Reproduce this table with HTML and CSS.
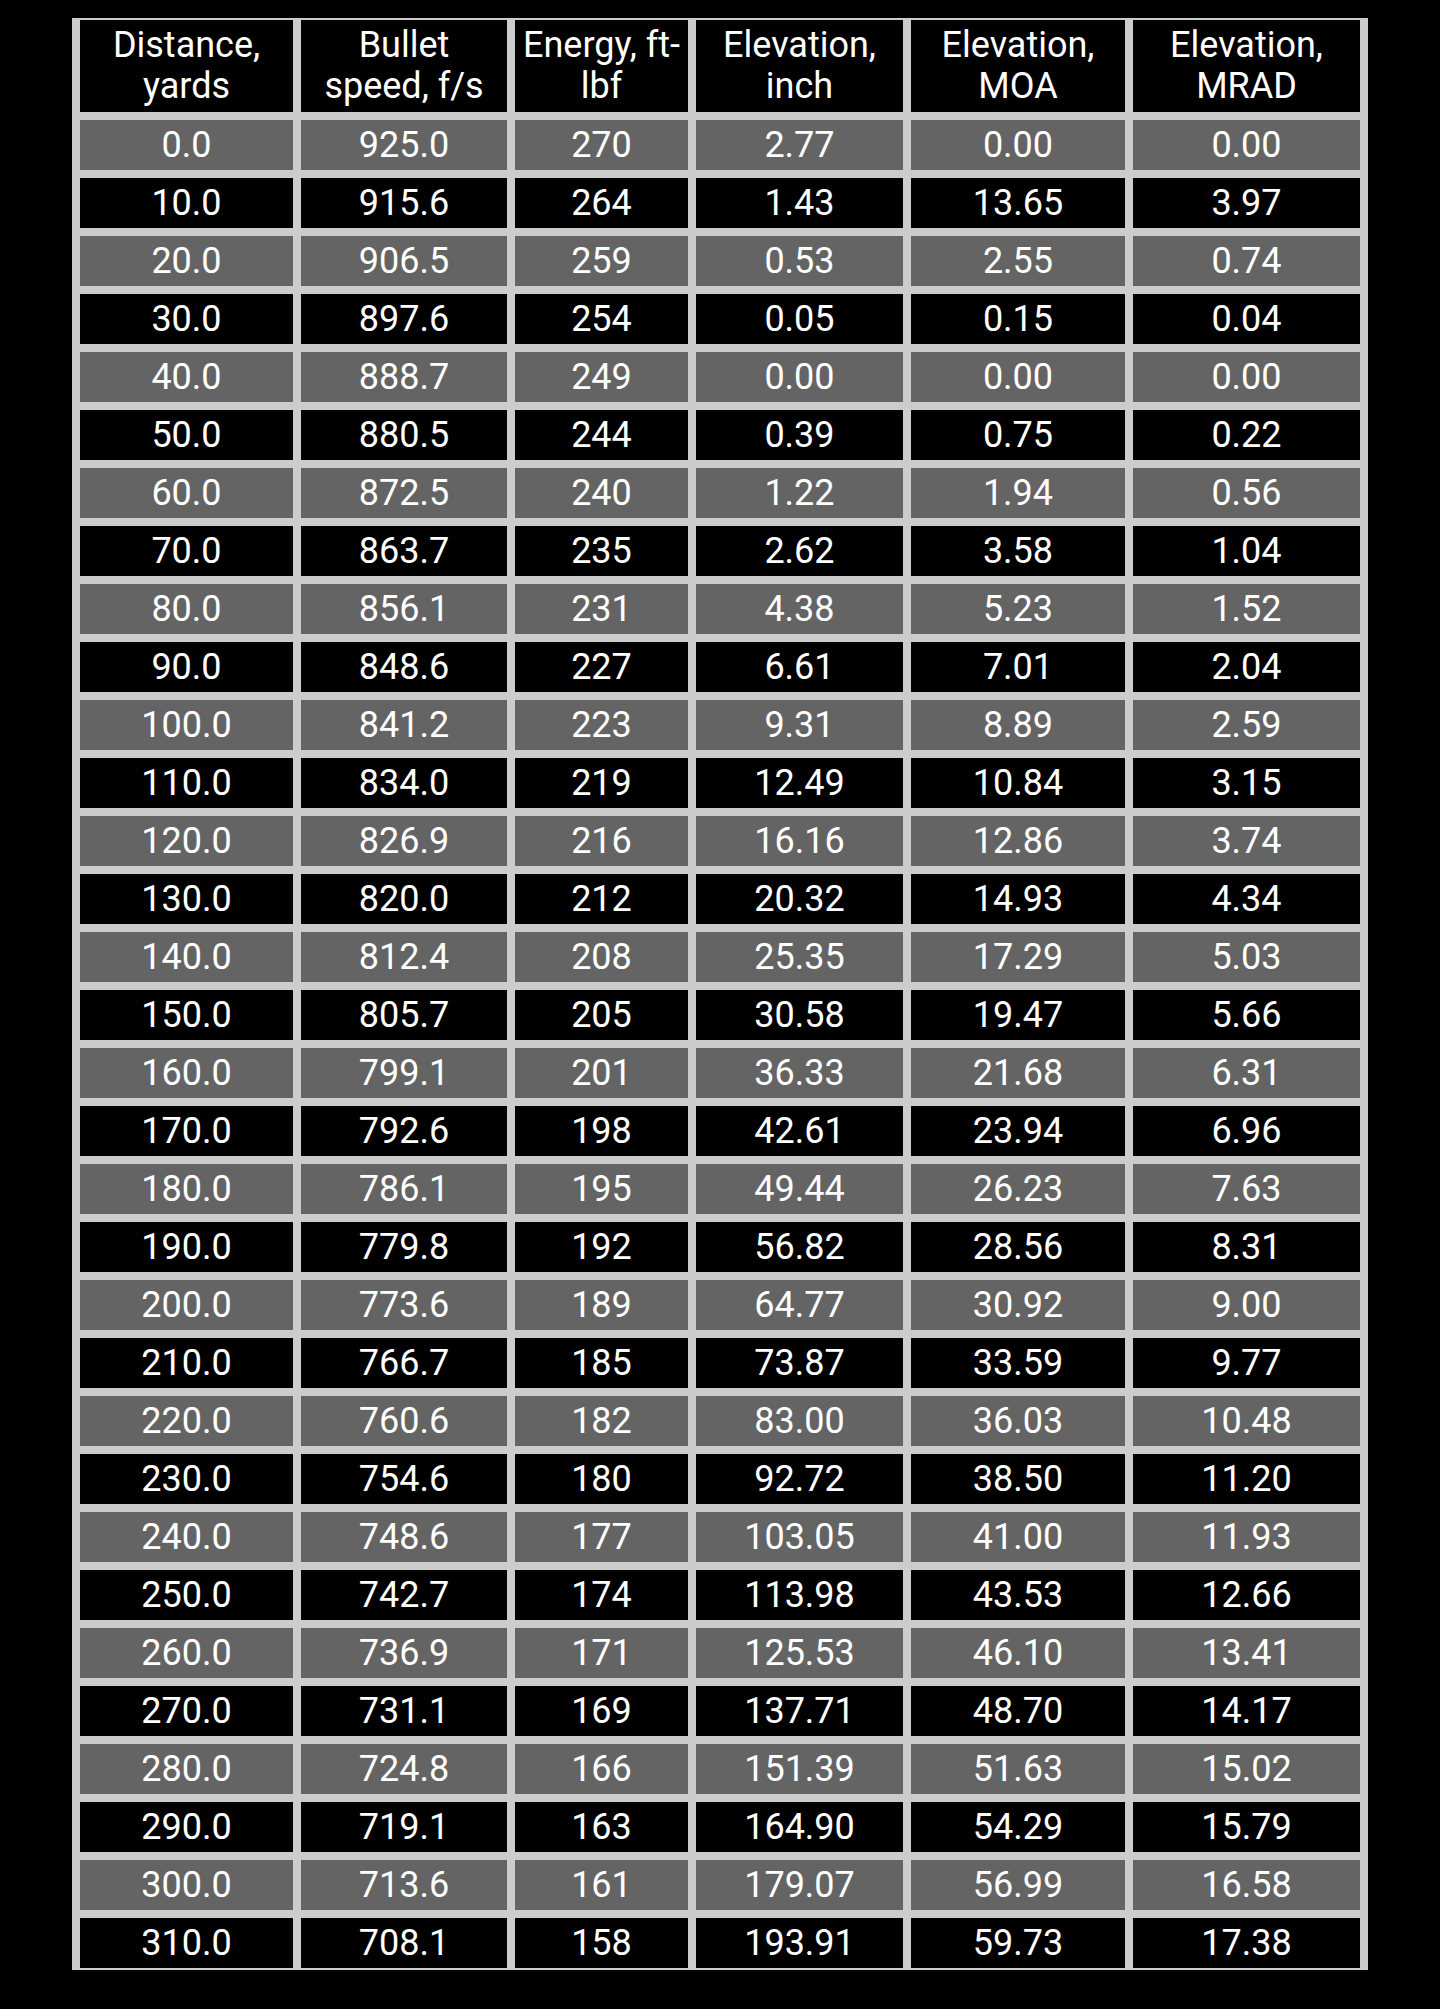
FILE: index.html
```html
<!DOCTYPE html>
<html lang="en">
<head>
<meta charset="utf-8">
<title>Ballistic table</title>
<link rel="stylesheet" href="styles.css">
</head>
<body>
<div class="page">
  <div class="table">
    <div class="row head">
      <div class="c">Distance,<br>yards</div>
      <div class="c">Bullet<br>speed, f/s</div>
      <div class="c">Energy, ft-<br>lbf</div>
      <div class="c">Elevation,<br>inch</div>
      <div class="c">Elevation,<br>MOA</div>
      <div class="c">Elevation,<br>MRAD</div>
    </div>
    <div class="row gray"><div class="c">0.0</div><div class="c">925.0</div><div class="c">270</div><div class="c">2.77</div><div class="c">0.00</div><div class="c">0.00</div></div>
    <div class="row dark"><div class="c">10.0</div><div class="c">915.6</div><div class="c">264</div><div class="c">1.43</div><div class="c">13.65</div><div class="c">3.97</div></div>
    <div class="row gray"><div class="c">20.0</div><div class="c">906.5</div><div class="c">259</div><div class="c">0.53</div><div class="c">2.55</div><div class="c">0.74</div></div>
    <div class="row dark"><div class="c">30.0</div><div class="c">897.6</div><div class="c">254</div><div class="c">0.05</div><div class="c">0.15</div><div class="c">0.04</div></div>
    <div class="row gray"><div class="c">40.0</div><div class="c">888.7</div><div class="c">249</div><div class="c">0.00</div><div class="c">0.00</div><div class="c">0.00</div></div>
    <div class="row dark"><div class="c">50.0</div><div class="c">880.5</div><div class="c">244</div><div class="c">0.39</div><div class="c">0.75</div><div class="c">0.22</div></div>
    <div class="row gray"><div class="c">60.0</div><div class="c">872.5</div><div class="c">240</div><div class="c">1.22</div><div class="c">1.94</div><div class="c">0.56</div></div>
    <div class="row dark"><div class="c">70.0</div><div class="c">863.7</div><div class="c">235</div><div class="c">2.62</div><div class="c">3.58</div><div class="c">1.04</div></div>
    <div class="row gray"><div class="c">80.0</div><div class="c">856.1</div><div class="c">231</div><div class="c">4.38</div><div class="c">5.23</div><div class="c">1.52</div></div>
    <div class="row dark"><div class="c">90.0</div><div class="c">848.6</div><div class="c">227</div><div class="c">6.61</div><div class="c">7.01</div><div class="c">2.04</div></div>
    <div class="row gray"><div class="c">100.0</div><div class="c">841.2</div><div class="c">223</div><div class="c">9.31</div><div class="c">8.89</div><div class="c">2.59</div></div>
    <div class="row dark"><div class="c">110.0</div><div class="c">834.0</div><div class="c">219</div><div class="c">12.49</div><div class="c">10.84</div><div class="c">3.15</div></div>
    <div class="row gray"><div class="c">120.0</div><div class="c">826.9</div><div class="c">216</div><div class="c">16.16</div><div class="c">12.86</div><div class="c">3.74</div></div>
    <div class="row dark"><div class="c">130.0</div><div class="c">820.0</div><div class="c">212</div><div class="c">20.32</div><div class="c">14.93</div><div class="c">4.34</div></div>
    <div class="row gray"><div class="c">140.0</div><div class="c">812.4</div><div class="c">208</div><div class="c">25.35</div><div class="c">17.29</div><div class="c">5.03</div></div>
    <div class="row dark"><div class="c">150.0</div><div class="c">805.7</div><div class="c">205</div><div class="c">30.58</div><div class="c">19.47</div><div class="c">5.66</div></div>
    <div class="row gray"><div class="c">160.0</div><div class="c">799.1</div><div class="c">201</div><div class="c">36.33</div><div class="c">21.68</div><div class="c">6.31</div></div>
    <div class="row dark"><div class="c">170.0</div><div class="c">792.6</div><div class="c">198</div><div class="c">42.61</div><div class="c">23.94</div><div class="c">6.96</div></div>
    <div class="row gray"><div class="c">180.0</div><div class="c">786.1</div><div class="c">195</div><div class="c">49.44</div><div class="c">26.23</div><div class="c">7.63</div></div>
    <div class="row dark"><div class="c">190.0</div><div class="c">779.8</div><div class="c">192</div><div class="c">56.82</div><div class="c">28.56</div><div class="c">8.31</div></div>
    <div class="row gray"><div class="c">200.0</div><div class="c">773.6</div><div class="c">189</div><div class="c">64.77</div><div class="c">30.92</div><div class="c">9.00</div></div>
    <div class="row dark"><div class="c">210.0</div><div class="c">766.7</div><div class="c">185</div><div class="c">73.87</div><div class="c">33.59</div><div class="c">9.77</div></div>
    <div class="row gray"><div class="c">220.0</div><div class="c">760.6</div><div class="c">182</div><div class="c">83.00</div><div class="c">36.03</div><div class="c">10.48</div></div>
    <div class="row dark"><div class="c">230.0</div><div class="c">754.6</div><div class="c">180</div><div class="c">92.72</div><div class="c">38.50</div><div class="c">11.20</div></div>
    <div class="row gray"><div class="c">240.0</div><div class="c">748.6</div><div class="c">177</div><div class="c">103.05</div><div class="c">41.00</div><div class="c">11.93</div></div>
    <div class="row dark"><div class="c">250.0</div><div class="c">742.7</div><div class="c">174</div><div class="c">113.98</div><div class="c">43.53</div><div class="c">12.66</div></div>
    <div class="row gray"><div class="c">260.0</div><div class="c">736.9</div><div class="c">171</div><div class="c">125.53</div><div class="c">46.10</div><div class="c">13.41</div></div>
    <div class="row dark"><div class="c">270.0</div><div class="c">731.1</div><div class="c">169</div><div class="c">137.71</div><div class="c">48.70</div><div class="c">14.17</div></div>
    <div class="row gray"><div class="c">280.0</div><div class="c">724.8</div><div class="c">166</div><div class="c">151.39</div><div class="c">51.63</div><div class="c">15.02</div></div>
    <div class="row dark"><div class="c">290.0</div><div class="c">719.1</div><div class="c">163</div><div class="c">164.90</div><div class="c">54.29</div><div class="c">15.79</div></div>
    <div class="row gray"><div class="c">300.0</div><div class="c">713.6</div><div class="c">161</div><div class="c">179.07</div><div class="c">56.99</div><div class="c">16.58</div></div>
    <div class="row dark"><div class="c">310.0</div><div class="c">708.1</div><div class="c">158</div><div class="c">193.91</div><div class="c">59.73</div><div class="c">17.38</div></div>
  </div>
</div>
</body>
</html>
```
FILE: styles.css
```css
html, body {
  margin: 0;
  padding: 0;
  background: #000000;
}
body {
  font-family: Roboto, "Liberation Sans", sans-serif;
  color: #ffffff;
  min-height: 2009px;
}
.page {
  padding: 18px 0 0 72px;
}
.table {
  width: 1296px;
  box-sizing: border-box;
  background: #cccccc;
  padding: 2px 8px;
  display: flex;
  flex-direction: column;
  gap: 8px;
}
.row {
  display: grid;
  grid-template-columns: 213px 206px 173px 207px 214px 227px;
  column-gap: 8px;
}
.c {
  font-size: 36px;
  text-align: center;
  height: 50px;
  line-height: 50px;
  white-space: nowrap;
}
.head .c {
  background: #000000;
  height: 92px;
  line-height: 41px;
  padding-top: 5px;
  box-sizing: border-box;
}
.gray .c {
  background: #646464;
}
.dark .c {
  background: #000000;
}
```
